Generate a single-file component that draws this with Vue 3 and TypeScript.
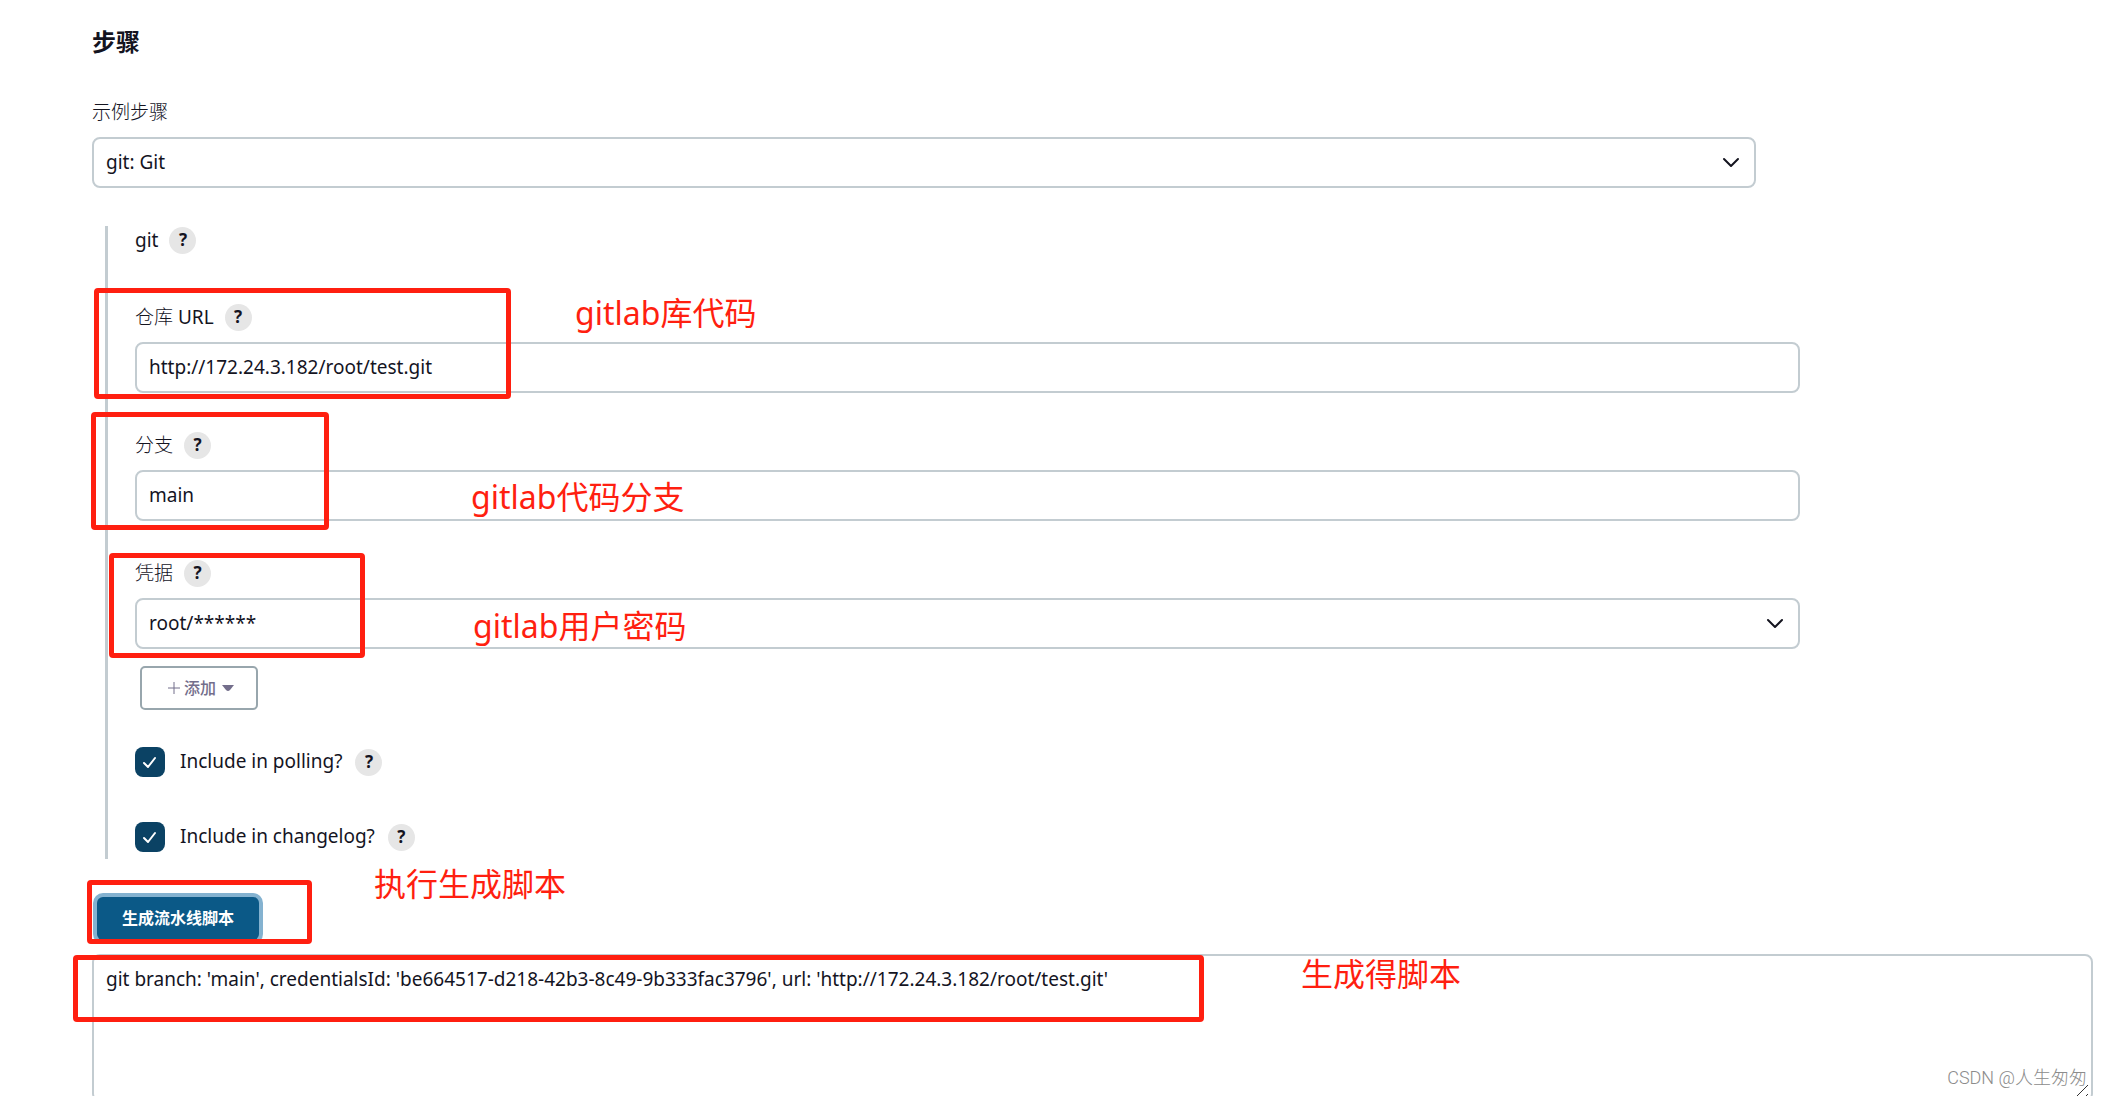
<script setup lang="ts">
import { ref } from 'vue'

interface Frame {
  left: number
  top: number
  width: number
  height: number
}

interface Note {
  text: string
  left: number
  top: number
}

const step = ref('git')
const repoUrl = ref('http://172.24.3.182/root/test.git')
const branch = ref('main')
const credential = ref('root')
const polling = ref(true)
const changelog = ref(true)
const script = ref(
  "git branch: 'main', credentialsId: 'be664517-d218-42b3-8c49-9b333fac3796', url: 'http://172.24.3.182/root/test.git'",
)

const frames: Frame[] = [
  { left: 94, top: 288, width: 417, height: 111 },
  { left: 91, top: 412, width: 238, height: 118 },
  { left: 109, top: 553, width: 256, height: 105 },
  { left: 87, top: 880, width: 225, height: 64 },
  { left: 73, top: 955, width: 1131, height: 67 },
]

const notes: Note[] = [
  { text: 'gitlab库代码', left: 575, top: 291 },
  { text: 'gitlab代码分支', left: 471, top: 475 },
  { text: 'gitlab用户密码', left: 473, top: 604 },
  { text: '执行生成脚本', left: 374, top: 862 },
  { text: '生成得脚本', left: 1301, top: 952 },
]

const px = (f: Frame) => ({
  left: `${f.left}px`,
  top: `${f.top}px`,
  width: `${f.width}px`,
  height: `${f.height}px`,
})
</script>

<template>
  <main class="page">
    <h2 class="title">步骤</h2>

    <div class="field top">
      <label class="caption" for="step">示例步骤</label>
      <div class="select">
        <select id="step" v-model="step" class="control">
          <option value="git">git: Git</option>
        </select>
        <svg class="chevron" viewBox="0 0 18 12" aria-hidden="true"><path d="M2 2l7 7 7-7" /></svg>
      </div>
    </div>

    <section class="nested">
      <div class="row heading">
        <span>git</span>
        <button type="button" class="help">?</button>
      </div>

      <div class="field">
        <div class="row">
          <label class="caption" for="url">仓库 <span class="latin">URL</span></label>
          <button type="button" class="help">?</button>
        </div>
        <input id="url" v-model="repoUrl" class="control" type="text" />
      </div>

      <div class="field">
        <div class="row">
          <label class="caption" for="branch">分支</label>
          <button type="button" class="help">?</button>
        </div>
        <input id="branch" v-model="branch" class="control" type="text" />
      </div>

      <div class="field">
        <div class="row">
          <label class="caption" for="credential">凭据</label>
          <button type="button" class="help">?</button>
        </div>
        <div class="select">
          <select id="credential" v-model="credential" class="control">
            <option value="root">root/******</option>
          </select>
          <svg class="chevron" viewBox="0 0 18 12" aria-hidden="true"><path d="M2 2l7 7 7-7" /></svg>
        </div>
      </div>

      <button type="button" class="add">
        <svg class="plus" viewBox="0 0 12 12" aria-hidden="true"><path d="M6 0v12M0 6h12" /></svg>
        <span>添加</span>
        <svg class="caret" viewBox="0 0 12 6" aria-hidden="true"><path d="M0 0h12L8 5Q6 7 4 5z" /></svg>
      </button>

      <div class="checks">
        <div class="row check">
          <span class="box">
            <input id="polling" v-model="polling" type="checkbox" />
            <svg v-if="polling" viewBox="0 0 30 30" aria-hidden="true"><path d="M9 16l4 4 7-9" /></svg>
          </span>
          <label for="polling">Include in polling?</label>
          <button type="button" class="help">?</button>
        </div>
        <div class="row check">
          <span class="box">
            <input id="changelog" v-model="changelog" type="checkbox" />
            <svg v-if="changelog" viewBox="0 0 30 30" aria-hidden="true"><path d="M9 16l4 4 7-9" /></svg>
          </span>
          <label for="changelog">Include in changelog?</label>
          <button type="button" class="help">?</button>
        </div>
      </div>
    </section>

    <button type="button" class="generate">生成流水线脚本</button>
    <div class="result">
      <textarea v-model="script" class="control output" aria-label="流水线脚本"></textarea>
      <svg class="grip" viewBox="0 0 16 16" aria-hidden="true"><path d="M0 16L16 0M9 16l7-7" /></svg>
    </div>

    <div v-for="(f, i) in frames" :key="i" class="frame" :style="px(f)"></div>
    <p
      v-for="n in notes"
      :key="n.text"
      class="note"
      :style="{ left: `${n.left}px`, top: `${n.top}px` }"
    >{{ n.text }}</p>
    <p class="watermark">CSDN @人生匆匆</p>
  </main>
</template>

<style>
html {
  scrollbar-width: none;
}
body {
  margin: 0;
  background: #fff;
}
</style>

<style scoped>
.page {
  position: relative;
  box-sizing: border-box;
  min-height: 100vh;
  overflow: hidden;
  padding: 24px 8px 0 92px;
  color: #14141f;
  font: 19px/27px 'Noto Sans', 'Noto Sans CJK SC', sans-serif;
}
.page *,
.page *::before {
  box-sizing: border-box;
}
button,
input,
select,
textarea {
  margin: 0;
  color: inherit;
  font: inherit;
}
.title {
  margin: 0 0 40px;
  font-size: 24px;
  line-height: 35px;
  font-weight: 700;
}
.field {
  display: flex;
  flex-direction: column;
  gap: 11px;
  max-width: 1665px;
}
.field.top {
  max-width: 1664px;
}
.caption {
  font-weight: 300;
}
.latin {
  font-weight: 400;
}
.row {
  display: flex;
  align-items: center;
  gap: 11px;
}
.control {
  width: 100%;
  height: 51px;
  padding: 0 12px 2px;
  border: 2px solid #c3ccd1;
  border-radius: 8px;
  background: #fff;
  outline: none;
}
.select {
  display: grid;
}
.select > * {
  grid-area: 1 / 1;
}
.select .control {
  appearance: none;
  padding-bottom: 0;
}
.chevron {
  width: 18px;
  height: 12px;
  margin-right: 16px;
  place-self: center end;
  pointer-events: none;
  fill: none;
  stroke: #14141f;
  stroke-width: 2;
  stroke-linecap: round;
  stroke-linejoin: round;
}
.help {
  display: grid;
  place-items: center;
  width: 27px;
  height: 27px;
  padding: 0 0 2px;
  border: 0;
  border-radius: 50%;
  background: #e6e6e6;
  font-size: 17px;
  line-height: 25px;
  font-weight: 700;
}
.nested {
  display: flex;
  flex-direction: column;
  gap: 39px;
  margin: 38px 0 0 13px;
  padding: 1px 0 7px 27px;
  border-left: 3px solid #c3ccd1;
}
.heading {
  margin-bottom: 11px;
}
.add {
  display: flex;
  align-items: center;
  align-self: flex-start;
  justify-content: center;
  gap: 4px;
  width: 118px;
  height: 44px;
  margin: -22px 0 0 5px;
  padding: 0 0 0 4px;
  border: 2px solid #98a6ad;
  border-radius: 5px;
  background: #fff;
  color: #736e8b;
  font-size: 16px;
  font-weight: 500;
}
.plus {
  width: 12px;
  height: 12px;
  fill: none;
  stroke: currentColor;
}
.caret {
  width: 12px;
  height: 6px;
  margin-left: 2px;
  fill: currentColor;
}
.checks {
  display: flex;
  flex-direction: column;
  gap: 45px;
  margin-top: -2px;
}
.check {
  gap: 13px;
}
.check label {
  margin-left: 2px;
  padding-bottom: 2px;
}
.box {
  display: grid;
  width: 30px;
  height: 30px;
}
.box > * {
  grid-area: 1 / 1;
}
.box input {
  appearance: none;
  width: 30px;
  height: 30px;
  border-radius: 8px;
  background: #c3ccd1;
}
.box input:checked {
  background: #0b4264;
}
.box svg {
  pointer-events: none;
  fill: none;
  stroke: #fff;
  stroke-width: 2;
  stroke-linecap: round;
  stroke-linejoin: round;
}
.generate {
  display: block;
  height: 43px;
  margin: 38px 0 14px 5px;
  padding: 0 25px;
  border: 0;
  border-radius: 6px;
  background: #0b5987;
  box-shadow: 0 0 0 4px #84b2d0;
  color: #fff;
  font-size: 16px;
  font-weight: 700;
}
.result {
  position: relative;
}
.output {
  display: block;
  height: 148px;
  padding: 10px 12px;
  resize: none;
}
.grip {
  position: absolute;
  right: 5px;
  bottom: 1px;
  width: 16px;
  height: 16px;
  pointer-events: none;
  fill: none;
  stroke: #333;
  stroke-width: 1;
}
.frame {
  position: absolute;
  border: 5px solid #ff1f10;
  border-radius: 4px;
  pointer-events: none;
}
.note {
  position: absolute;
  margin: 0;
  color: #ff1f10;
  font-size: 32px;
  line-height: 44px;
  white-space: nowrap;
}
.watermark {
  position: absolute;
  right: 14px;
  top: 1064px;
  margin: 0;
  color: #8c8c8c;
  font: 18px/27px Roboto, 'Noto Sans CJK SC', sans-serif;
  font-weight: 300;
  white-space: nowrap;
  pointer-events: none;
}
</style>
